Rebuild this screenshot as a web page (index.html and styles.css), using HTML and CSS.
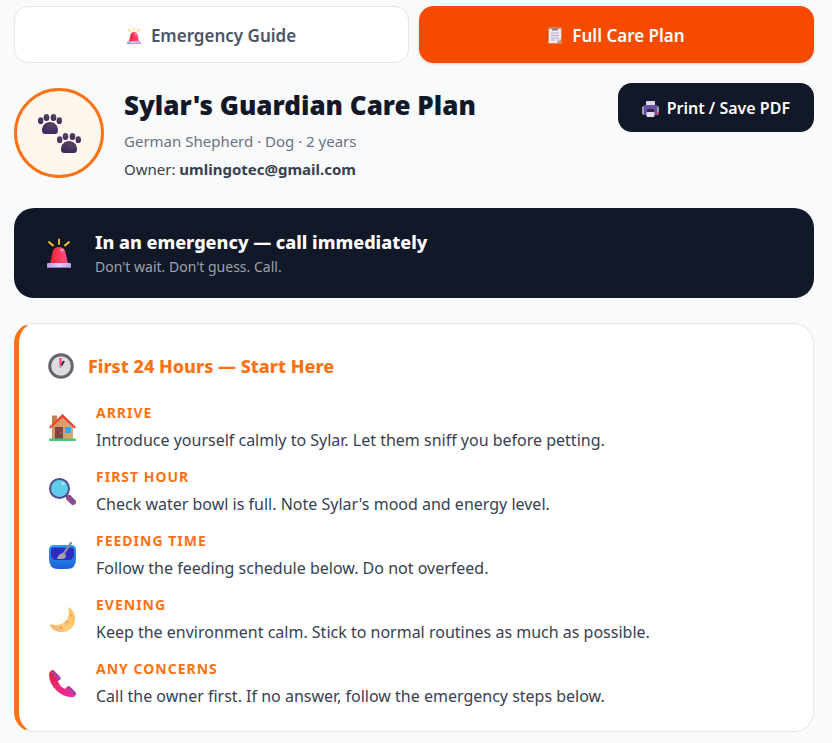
FILE: index.html
```
<!DOCTYPE html>
<html lang="en">
<head>
    <meta charset="UTF-8">
    <meta name="viewport" content="width=device-width, initial-scale=1.0">
    <title>Sylar's Guardian Care Plan</title>
    <link rel="stylesheet" href="styles.css">
</head>
<body>
    <!-- Shared icon shapes -->
    <svg class="sprite" aria-hidden="true">
        <defs>
            <linearGradient id="dome" x1="0" x2="1"><stop offset="0" stop-color="#f5232c"/><stop offset="1" stop-color="#ff4f8b"/></linearGradient>
            <linearGradient id="base" x1="0" x2="1"><stop offset="0" stop-color="#b99ae0"/><stop offset=".5" stop-color="#dcd0f2"/><stop offset="1" stop-color="#c0a2e2"/></linearGradient>
            <radialGradient id="pad" cx=".6" cy=".3" r=".8"><stop offset="0" stop-color="#55455f"/><stop offset="1" stop-color="#3c2260"/></radialGradient>
            <linearGradient id="wood" x1="0" x2="1"><stop offset="0" stop-color="#d29160"/><stop offset="1" stop-color="#e0a878"/></linearGradient>
            <linearGradient id="bowl" x1="0" y1="0" x2="0" y2="1"><stop offset="0" stop-color="#2f9df4"/><stop offset="1" stop-color="#1d62d6"/></linearGradient>
            <linearGradient id="moon" x1="1" y1="0" x2="0" y2="1"><stop offset="0" stop-color="#fbb95e"/><stop offset=".6" stop-color="#ffd079"/><stop offset="1" stop-color="#f2a868"/></linearGradient>
            <linearGradient id="phone" x1="0" y1="0" x2="1" y2="1"><stop offset="0" stop-color="#e52440"/><stop offset="1" stop-color="#f02bae"/></linearGradient>
        </defs>
        <symbol id="siren" viewBox="0 0 24 30">
            <path d="M2 4l4 3.500M12 1.500v4.500M22 4l-4 3.500" stroke="#ffc83d" stroke-width="1.800" stroke-linecap="round" fill="none"/>
            <path d="M3 26L6 12.500Q7.500 9 12 9t6 3.500L21 26z" fill="url(#dome)"/>
            <ellipse cx="15" cy="12" rx="1.800" ry="1.500" fill="#ff9fb4"/>
            <rect y="25" width="24" height="5" rx="1" fill="url(#base)"/>
            <path d="M0 29.500h24" stroke="#9a72c8"/>
        </symbol>
        <symbol id="paw" viewBox="0 0 24 20">
            <g fill="url(#pad)">
                <ellipse cx="2.700" cy="6.700" rx="2.700" ry="3.400"/>
                <ellipse cx="8.500" cy="3.500" rx="2.800" ry="3.500"/>
                <ellipse cx="15.500" cy="3.500" rx="2.800" ry="3.500"/>
                <ellipse cx="21.300" cy="6.700" rx="2.700" ry="3.400"/>
                <path d="M12 8c4.500 0 8 3.500 8 8.500 0 2.500-1.200 3.500-3.500 3.500h-9C5.200 20 4 19 4 16.500 4 11.500 7.500 8 12 8z"/>
            </g>
        </symbol>
    </svg>

    <div class="container">
        <nav class="tabs">
            <button class="tab" type="button">
                <svg class="tab-icon" aria-hidden="true"><use href="#siren"/></svg>
                Emergency Guide
            </button>
            <button class="tab active" type="button">
                <svg class="tab-icon" viewBox="0 0 14 17" aria-hidden="true">
                    <rect width="14" height="17" rx="1" fill="#d9874f"/>
                    <path d="M1 2h12v10l-4 4H1z" fill="#eee9f5"/>
                    <path d="M9 16v-3.500h4z" fill="#c8bcda"/>
                    <path d="M4 3.500V2h1.500Q7-1 8.500 2H10v1.500z" fill="#85798c"/>
                    <path d="M3 6h8M3 8.500h8M3 11h8M3 13h4" stroke="#a99fb5" stroke-width=".9"/>
                </svg>
                Full Care Plan
            </button>
        </nav>

        <header class="plan-header">
            <div class="pet">
                <div class="avatar">
                    <svg class="paws" viewBox="0 0 43 39" role="img" aria-label="Paw prints">
                        <use href="#paw" width="24" height="20"/>
                        <use href="#paw" x="19" y="19" width="24" height="20"/>
                    </svg>
                </div>
                <div>
                    <h1>Sylar's Guardian Care Plan</h1>
                    <p class="breed">German Shepherd · Dog · 2 years</p>
                    <p class="owner">Owner: <strong>umlingotec@gmail.com</strong></p>
                </div>
            </div>
            <button class="print-btn" type="button">
                <svg class="print-icon" viewBox="0 0 17 16" aria-hidden="true">
                    <rect x="4" width="9" height="6" rx="1" fill="#ded7ea"/>
                    <rect x="0" y="5" width="17" height="9" rx="2" fill="#a59ab5"/>
                    <rect x="2" y="4" width="13" height="10" fill="#6850a0"/>
                    <rect x="5" y="8" width="7" height="4" fill="#302447"/>
                    <rect x="4.500" y="11" width="8" height="5" rx="1" fill="#e3dcee"/>
                    <rect x="15" y="11" width="2" height="2" fill="#f03c6c"/>
                </svg>
                Print / Save PDF
            </button>
        </header>

        <section class="emergency">
            <svg class="emergency-icon" aria-hidden="true"><use href="#siren"/></svg>
            <div>
                <h2>In an emergency — call immediately</h2>
                <p>Don't wait. Don't guess. Call.</p>
            </div>
        </section>

        <section class="first-day">
            <h2>
                <svg class="clock" viewBox="0 0 26 26" aria-hidden="true">
                    <circle cx="13" cy="13" r="11.300" fill="#dedbe1" stroke="#68646c" stroke-width="3"/>
                    <path d="M13 13l3-5" stroke="#37265f" stroke-width="2.200"/>
                    <path d="M12.500 14V5" stroke="#f33b64" stroke-width="2"/>
                    <circle cx="12.500" cy="13.500" r="1.500" fill="#aaa4b0"/>
                </svg>
                First 24 Hours — Start Here
            </h2>

            <div class="step">
                <svg class="step-icon" viewBox="0 0 27 27" aria-hidden="true">
                    <path d="M3 1.500h5v10H3z" fill="#c6804c"/>
                    <path d="M3 11L13.500 2 24 11v14H3z" fill="url(#wood)"/>
                    <path d="M0 13L13.500 0 27 13l-1.500 1.500L13.500 3.500 1.500 14.500z" fill="#ee4531"/>
                    <rect x="6" y="13" width="8" height="12" fill="#7b4646"/>
                    <circle cx="12" cy="19" r=".8" fill="#c6937d"/>
                    <rect x="16" y="13" width="6" height="6" fill="#31a8f5"/>
                    <rect y="24.500" width="27" height="2.500" rx="1" fill="#3fc973"/>
                </svg>
                <div>
                    <h3>Arrive</h3>
                    <p>Introduce yourself calmly to Sylar. Let them sniff you before petting.</p>
                </div>
            </div>
            <div class="step">
                <svg class="step-icon" viewBox="0 0 27 27" aria-hidden="true">
                    <path d="M16 16l4 4" stroke="#4c3f78" stroke-width="3"/>
                    <path d="M20 20l4 4" stroke="#8b4b93" stroke-width="6" stroke-linecap="round"/>
                    <circle cx="10.500" cy="10.500" r="9.500" fill="#61cdea" stroke="#504d8c" stroke-width="2"/>
                    <ellipse cx="14" cy="5.500" rx="2" ry="1.500" fill="#a8e9f7"/>
                </svg>
                <div>
                    <h3>First hour</h3>
                    <p>Check water bowl is full. Note Sylar's mood and energy level.</p>
                </div>
            </div>
            <div class="step">
                <svg class="step-icon" viewBox="0 0 27 27" aria-hidden="true">
                    <path d="M5 3h17q5 0 5 5v9q0 10-9 10H9Q0 27 0 17V8q0-5 5-5z" fill="url(#bowl)"/>
                    <path d="M4 5.500h19q2 0 2 3v3.500q0 6-6 6H8q-6 0-6-6V8.500q0-3 2-3z" fill="#2c2cc0"/>
                    <path d="M15 11l7-10" stroke="#8f8b96" stroke-width="2.200" stroke-linecap="round"/>
                    <path d="M8 17q1-5 6-6l3 2q0 4-4 4z" fill="#a7a1ac"/>
                </svg>
                <div>
                    <h3>Feeding time</h3>
                    <p>Follow the feeding schedule below. Do not overfeed.</p>
                </div>
            </div>
            <div class="step">
                <svg class="step-icon" viewBox="0 0 27 27" aria-hidden="true">
                    <path d="M20.500 1.500C31 10 26 26 13 26 7 26 3 23.500 1 19.500c-.3-1 .5-1.500 1.500-1C14 21 22 13 19.500 2.500c-.1-1 .4-1.500 1-1z" fill="url(#moon)"/>
                    <circle cx="18.500" cy="17" r="2.300" fill="#eda75b"/>
                    <circle cx="19" cy="17.500" r="1.500" fill="#ffc973"/>
                    <circle cx="12" cy="21.500" r="1.500" fill="#e99c56"/>
                    <circle cx="22" cy="9.500" r="1.100" fill="#e99c56"/>
                </svg>
                <div>
                    <h3>Evening</h3>
                    <p>Keep the environment calm. Stick to normal routines as much as possible.</p>
                </div>
            </div>
            <div class="step">
                <svg class="step-icon" viewBox="0 0 27 27" aria-hidden="true">
                    <path d="M0 4Q1 0 4 0l7 7q.5 2-2 4 1 5 7 8 2-3 4-3l7 7q.5 2-2 4-9 1-17-6T0 4z" fill="url(#phone)"/>
                    <path d="M4 2l6 6.500M20 18l5.500 5.500" stroke="#ad459f" stroke-width="3.400" stroke-linecap="round"/>
                </svg>
                <div>
                    <h3>Any concerns</h3>
                    <p>Call the owner first. If no answer, follow the emergency steps below.</p>
                </div>
            </div>
        </section>
    </div>
</body>
</html>
```
FILE: styles.css
```
/* General Styles */
* {
    box-sizing: border-box;
}

body {
    font-family: "Segoe UI", "Noto Sans", sans-serif;
    margin: 0;
    background-color: #f9fafb;
    color: #374151;
}

h1, h2, h3, p {
    margin: 0;
}

svg {
    flex-shrink: 0;
}

.sprite {
    position: absolute;
    width: 0;
    height: 0;
}

.container {
    padding: 6px 18px 11px 14px;
}

/* Tabs */
.tabs {
    display: flex;
    gap: 10px;
    margin-bottom: 20px;
}

.tab {
    flex: 1;
    display: flex;
    align-items: center;
    justify-content: center;
    gap: 10px;
    padding: 17px 16px 15px;
    border: 1px solid #e5e7eb;
    border-radius: 14px;
    background-color: #fff;
    color: #4b5563;
    font-family: inherit;
    font-size: 17px;
    font-weight: 600;
    line-height: 23px;
    cursor: pointer;
}

.tab.active {
    background-color: #f54a00;
    border-color: #f54a00;
    color: #fff;
    box-shadow: 0 1px 3px rgba(0, 0, 0, 0.12);
}

.tab-icon {
    width: 14px;
    height: 17px;
}

/* Header */
.plan-header {
    display: flex;
    align-items: flex-start;
    justify-content: space-between;
    gap: 20px;
    margin-bottom: 25px;
}

.pet {
    display: flex;
    align-items: center;
    gap: 20px;
}

.avatar {
    display: flex;
    align-items: center;
    justify-content: center;
    flex-shrink: 0;
    width: 90px;
    height: 90px;
    border: 3px solid #f97316;
    border-radius: 50%;
    background-color: #fff7ed;
}

.paws {
    width: 43px;
    height: 39px;
}

h1 {
    color: #111827;
    font-size: 26px;
    font-weight: 900;
    line-height: 44px;
}

.breed {
    color: #6b7280;
    font-size: 15px;
    line-height: 28px;
}

.owner {
    font-size: 15px;
    line-height: 28px;
}

.print-btn {
    display: flex;
    align-items: center;
    gap: 8px;
    flex-shrink: 0;
    padding: 14px 24px 12px;
    border: none;
    border-radius: 14px;
    background-color: #111827;
    color: #fff;
    font-family: inherit;
    font-size: 16px;
    font-weight: 600;
    line-height: 23px;
    cursor: pointer;
}

.print-icon {
    width: 17px;
    height: 16px;
}

/* Emergency banner */
.emergency {
    display: flex;
    align-items: center;
    gap: 24px;
    margin-bottom: 25px;
    padding: 20px 33px;
    border-radius: 20px;
    background-color: #111827;
}

.emergency h2 {
    color: #fff;
    font-size: 18px;
    font-weight: 800;
    line-height: 28px;
}

.emergency p {
    color: #9ca3af;
    font-size: 14px;
    line-height: 22px;
}

.emergency-icon {
    width: 24px;
    height: 30px;
}

/* First 24 hours */
.first-day {
    display: flex;
    flex-direction: column;
    gap: 10px;
    padding: 28px 28px 21px 29px;
    border: 1px solid #e5e7eb;
    border-left: 5px solid #f97316;
    border-radius: 20px;
    background-color: #fff;
}

.first-day h2 {
    display: flex;
    align-items: center;
    gap: 14px;
    margin-bottom: 10px;
    color: #f97316;
    font-size: 18px;
    font-weight: 800;
    line-height: 28px;
}

.clock {
    width: 26px;
    height: 26px;
}

.step {
    display: flex;
    align-items: center;
    gap: 20px;
    padding-left: 1px;
}

.step-icon {
    width: 27px;
    height: 27px;
}

.step h3 {
    color: #f97316;
    font-size: 14px;
    font-weight: 700;
    letter-spacing: 1px;
    line-height: 26px;
    text-transform: uppercase;
}

.step p {
    font-size: 16px;
    line-height: 28px;
}

@media (max-width: 640px) {
    .plan-header {
        flex-direction: column;
    }
}
```
